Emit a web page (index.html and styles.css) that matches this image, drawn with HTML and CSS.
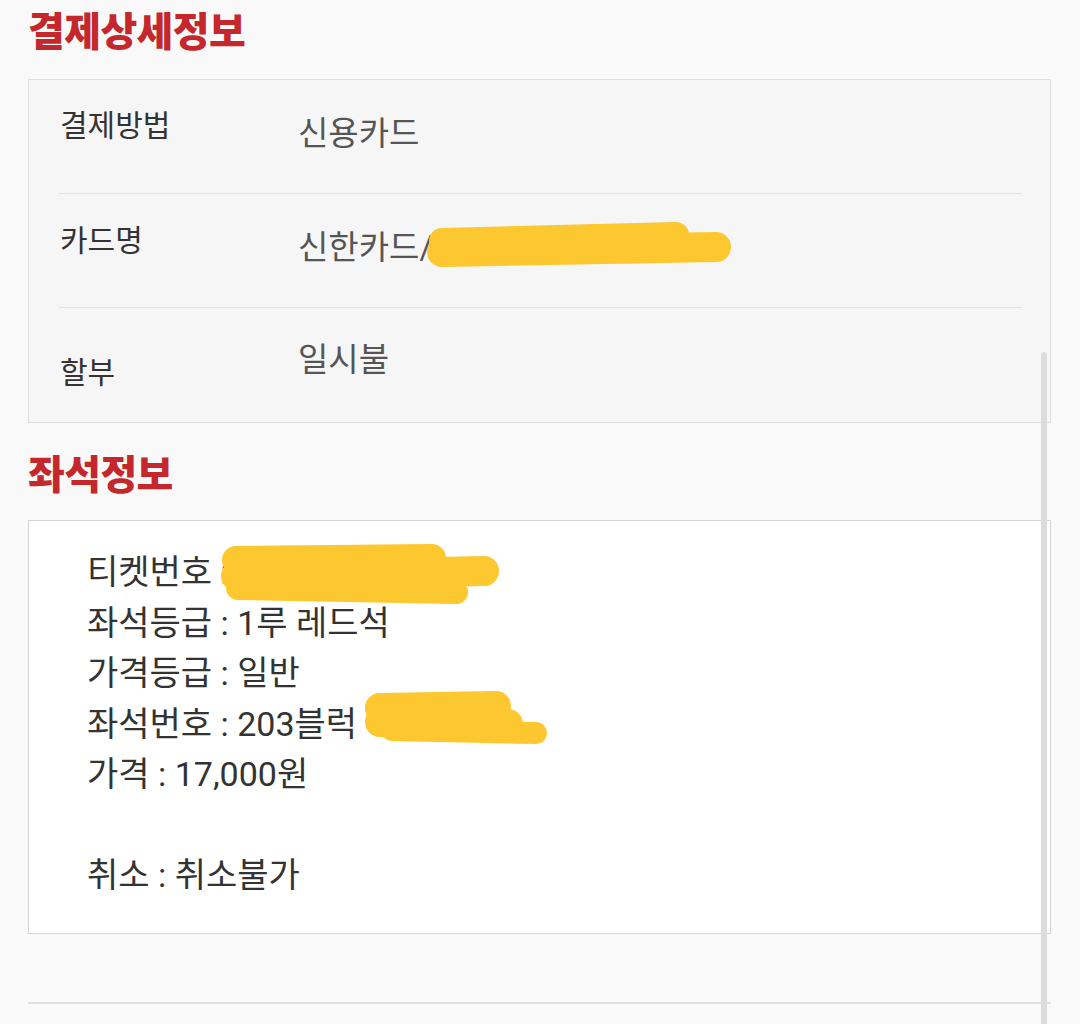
FILE: index.html
```html
<!DOCTYPE html>
<html lang="ko">
<head>
<meta charset="utf-8">
<title>결제상세정보</title>
<link rel="stylesheet" href="styles.css">
</head>
<body>
<div class="page">
  <h2 class="section-title">결제상세정보</h2>
  <div class="pay-box">
    <div class="pay-row row-1">
      <div class="pay-label">결제방법</div>
      <div class="pay-value">신용카드</div>
    </div>
    <div class="pay-row row-2">
      <div class="pay-label">카드명</div>
      <div class="pay-value">신한카드/</div>
    </div>
    <div class="pay-row row-3">
      <div class="pay-label">할부</div>
      <div class="pay-value">일시불</div>
    </div>
  </div>

  <h2 class="section-title seat-title">좌석정보</h2>
  <div class="seat-box">
    <div class="seat-line">티켓번호 : </div>
    <div class="seat-line">좌석등급 : 1루 레드석</div>
    <div class="seat-line">가격등급 : 일반</div>
    <div class="seat-line">좌석번호 : 203블럭</div>
    <div class="seat-line">가격 : 17,000원</div>
    <div class="seat-line">&nbsp;</div>
    <div class="seat-line">취소 : 취소불가</div>
  </div>
  <div class="bottom-rule"></div>
</div>

<div class="scrollbar"></div>

<svg class="scribbles" width="1080" height="1024" viewBox="0 0 1080 1024" aria-hidden="true">
  <g fill="none" stroke="#fcc72f" stroke-linecap="round" stroke-linejoin="round">
    <path d="M442 241 L676 235" stroke-width="26"/>
    <path d="M442 252 L716 247" stroke-width="30"/>
    <path d="M236 560 L432 558" stroke-width="28"/>
    <path d="M236 576 L484 571" stroke-width="30"/>
    <path d="M238 588 L456 592" stroke-width="24"/>
    <path d="M380 708 L496 706" stroke-width="30"/>
    <path d="M380 722 L508 724" stroke-width="30"/>
    <path d="M392 730 L536 733" stroke-width="22"/>
  </g>
</svg>
</body>
</html>
```

FILE: styles.css
```css
html, body {
  margin: 0;
  padding: 0;
  background: #f9f9f9;
}

body {
  font-family: "Roboto", "Noto Sans CJK KR", "Noto Sans", sans-serif;
  width: 1080px;
  height: 1024px;
  overflow: hidden;
  position: relative;
}

.page {
  padding-left: 28px;
  width: 1023px;
}

.section-title {
  margin: 0;
  color: #c4282c;
  font-family: "Noto Sans CJK KR", sans-serif;
  font-size: 40px;
  font-weight: 900;
  letter-spacing: -0.6px;
  line-height: 58px;
  padding-left: 0;
  height: 79px;
}

.seat-title {
  height: auto;
  margin-top: 20px;
  margin-bottom: 19px;
}

.pay-box {
  box-sizing: border-box;
  height: 344px;
  border: 1.5px solid #dedede;
  background: #f6f6f6;
  padding: 0 28px 0 30px;
}

.pay-row {
  display: flex;
  box-sizing: border-box;
  height: 114px;
  border-bottom: 1.5px solid #e2e2e2;
}

.pay-row.row-3 {
  border-bottom: none;
}

.pay-label {
  width: 238px;
  padding-left: 1px;
  color: #333;
  font-size: 30px;
  line-height: 38px;
}

.pay-value {
  color: #555;
  font-size: 33px;
  line-height: 42px;
}

.row-1 .pay-label { padding-top: 27px; }
.row-1 .pay-value { padding-top: 33px; }
.row-2 .pay-label { padding-top: 28px; }
.row-2 .pay-value { padding-top: 33px; }
.row-3 .pay-label { padding-top: 46px; }
.row-3 .pay-value { padding-top: 31px; }

.seat-box {
  box-sizing: border-box;
  height: 414px;
  background: #fff;
  border: 1.5px solid #d4d4d4;
  padding: 26px 0 0 58px;
}

.seat-line {
  color: #333;
  font-size: 34px;
  line-height: 50.5px;
}

.bottom-rule {
  margin-top: 68px;
  height: 2px;
  background: #e0e0e0;
}

.scrollbar {
  position: absolute;
  left: 1041px;
  top: 352px;
  width: 6px;
  height: 680px;
  border-radius: 3px;
  background: #dcdcdc;
}

.scribbles {
  position: absolute;
  left: 0;
  top: 0;
  pointer-events: none;
}
```
